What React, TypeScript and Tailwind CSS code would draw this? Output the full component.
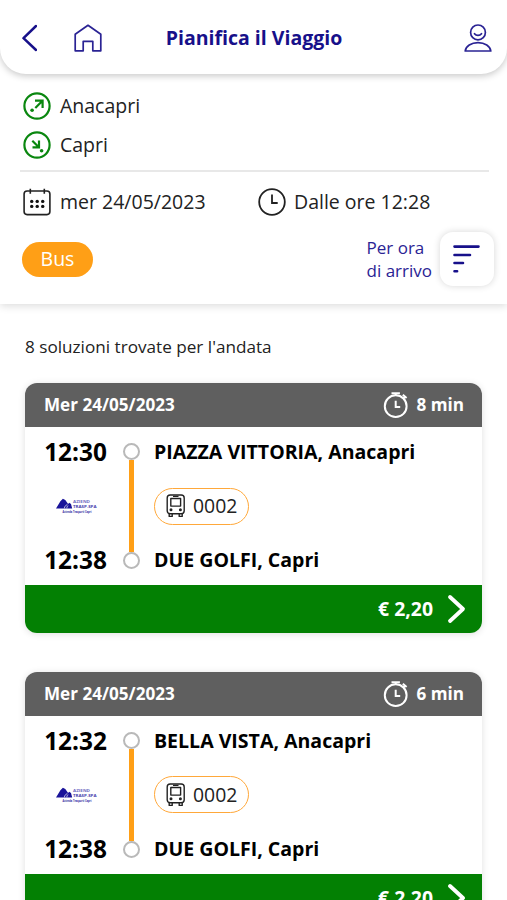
import React from 'react';

type Solution = { date: string; duration: string; depart: string; arrive: string; from: string; to: string; line: string; price: string };

const solutions: Solution[] = [
  { date: 'Mer 24/05/2023', duration: '8 min', depart: '12:30', arrive: '12:38', from: 'PIAZZA VITTORIA, Anacapri', to: 'DUE GOLFI, Capri', line: '0002', price: '€ 2,20' },
  { date: 'Mer 24/05/2023', duration: '6 min', depart: '12:32', arrive: '12:38', from: 'BELLA VISTA, Anacapri', to: 'DUE GOLFI, Capri', line: '0002', price: '€ 2,20' },
];

function BackIcon() {
  return (
    <svg width="16" height="28" viewBox="0 0 16 28" fill="none" stroke="#17108a" strokeWidth="2.5" strokeLinecap="round" strokeLinejoin="round">
      <path d="M15 2 2.500 14.200 15 26" />
    </svg>
  );
}

function HomeIcon() {
  return (
    <svg width="28" height="28" viewBox="0 0 28 28" fill="none" stroke="#2a2394" strokeWidth="1.7" strokeLinejoin="round">
      <path d="M1.2 10.3 14 1.3l12.8 9v16.500h-8v-9.500H9.2v9.500h-8z" />
    </svg>
  );
}

function UserIcon() {
  return (
    <svg width="28" height="28" viewBox="0 0 28 28" fill="none" stroke="#2a2394" strokeWidth="1.7" strokeLinecap="round" strokeLinejoin="round">
      <circle cx="14" cy="8.400" r="7.400" />
      <path d="M10.500 9.700c1.700 2.300 5.300 2.300 7 0" />
      <path d="M1.200 27c.5-4.700 6-8.400 12.800-8.400S26.300 22.300 26.800 27z" />
    </svg>
  );
}

function OriginIcon() {
  return (
    <svg width="28" height="28" viewBox="0 0 28 28" fill="none" stroke="#0a870f" strokeWidth="2.200">
      <circle cx="14" cy="14" r="12.600" />
      <path d="M12.300 16 19 9.200M12 8.600h7.600v7.300" />
      <circle cx="9.100" cy="18.300" r="1.800" fill="#0a870f" stroke="none" />
    </svg>
  );
}

function DestinationIcon() {
  return (
    <svg width="28" height="28" viewBox="0 0 28 28" fill="none" stroke="#0a870f" strokeWidth="2.200">
      <circle cx="14" cy="14" r="12.600" />
      <path d="m9.300 9.700 6 6M16 9.400v6.900H9.500" />
      <circle cx="18.600" cy="19.700" r="1.800" fill="#0a870f" stroke="none" />
    </svg>
  );
}

function CalendarIcon() {
  return (
    <svg width="28" height="28" viewBox="0 0 28 28" fill="none" stroke="#222" strokeWidth="1.600">
      <rect x="1.100" y="3" width="25.800" height="23.600" rx="3" />
      <path d="M7.300 .800v5M21.300 .800v5" />
      <g fill="#111" stroke="none">
        <circle cx="8.700" cy="13.400" r="1.700" /><circle cx="14.200" cy="13.400" r="1.700" /><circle cx="19.700" cy="13.400" r="1.700" />
        <circle cx="8.700" cy="18.400" r="1.700" /><circle cx="14.200" cy="18.400" r="1.700" /><circle cx="19.700" cy="18.400" r="1.700" />
      </g>
    </svg>
  );
}

function ClockIcon() {
  return (
    <svg width="28" height="28" viewBox="0 0 28 28" fill="none" stroke="#222" strokeWidth="1.800">
      <circle cx="14" cy="14" r="12.800" />
      <path d="M14 6.500V15h5.700" />
    </svg>
  );
}

function SortIcon() {
  return (
    <svg width="28" height="30" viewBox="0 0 28 30" fill="none" stroke="#17108a" strokeWidth="2.600" strokeLinecap="round">
      <path d="M1.500 2.600h24M1.500 11h15.500M1.500 19h8.500M1.500 27.300h2.600" />
    </svg>
  );
}

function StopwatchIcon() {
  return (
    <svg width="26" height="28" viewBox="0 0 26 28" fill="none" stroke="#fff" strokeWidth="2">
      <circle cx="12.700" cy="15.200" r="10.900" />
      <path d="M8.500 2.300h8.400M12.700 2.300v2.500M12.700 9.700v6.200h4.500M20.500 7.300l1.500-1.700M19.800 3.800l3.800 3.200" />
    </svg>
  );
}

function BusIcon() {
  return (
    <svg width="20" height="24" viewBox="0 0 20 24" fill="none" stroke="#222" strokeWidth="1.400" strokeLinejoin="round">
      <rect x="1.200" y="1" width="17" height="18.800" rx="3" />
      <path d="M4.800 4.500h9.800v7.600H4.800zM7 2.400h5.500M3.200 19.900v2.500h3v-2.500M13.200 19.900v2.500h3v-2.500" />
      <circle cx="5" cy="15.800" r=".8" /><circle cx="14.400" cy="15.800" r=".8" />
    </svg>
  );
}

function OperatorLogo() {
  return (
    <svg className="ml-[2px] overflow-visible" width="42" height="20" viewBox="0 -1 42 20" fill="#1a149a">
      <path d="M0 11.500 4.400 4.200 6.900 1.800 9.300 3l2.800 4 1.100-1.200 1.800 1.100 1.200 4.600z" />
      <path d="M8.300 11.300c.6-2.500 1.800-3.500 3.200-3.400M10.800 11.300c.2-1.700.7-2.300 1.500-2.500" stroke="#fff" strokeWidth=".7" fill="none" />
      <text x="17" y="6.300" fontFamily="Open Sans, sans-serif" fontSize="3.600" fill="#6f69bf" textLength="17" lengthAdjust="spacingAndGlyphs">AZIEND</text>
      <text x="17" y="11.100" fontFamily="Open Sans, sans-serif" fontSize="3.500" fill="#4a44ae" textLength="23.500" lengthAdjust="spacingAndGlyphs">TRASP.SPA</text>
      <text x="6.500" y="15.600" fontFamily="Open Sans, sans-serif" fontWeight="700" fontSize="3" fill="#332ca5" textLength="29" lengthAdjust="spacingAndGlyphs">Azienda Trasporti Capri</text>
    </svg>
  );
}

function SolutionCard({ s }: { s: Solution }) {
  return (
    <article className="flex h-[250px] flex-col overflow-hidden rounded-xl bg-white shadow-[0_1px_7px_rgba(0,0,0,0.13)]">
      <div className="flex h-11 shrink-0 items-center justify-between bg-[#5f5f5f] pr-[18px] pl-[19px] text-[17.100px] font-bold text-white">
        <span>{s.date}</span>
        <span className="flex items-center gap-[8px]"><StopwatchIcon />{s.duration}</span>
      </div>
      <div className="flex h-[158px] shrink-0 pl-[19px] text-black">
        <div className="flex w-[63px] flex-col items-center justify-between py-2 text-[24.400px] leading-[34px] font-bold">
          <span>{s.depart}</span>
          <OperatorLogo />
          <span>{s.arrive}</span>
        </div>
        <div className="ml-[15px] flex w-[18px] flex-col items-center py-4">
          <span className="size-[17px] shrink-0 rounded-full border-2 border-[#b9b9b9]" />
          <span className="w-[5px] grow bg-[#ff9f16]" />
          <span className="size-[17px] shrink-0 rounded-full border-2 border-[#b9b9b9]" />
        </div>
        <div className="ml-[14px] flex flex-col items-start justify-between py-[10px] text-[19.550px] leading-[30px] font-bold whitespace-nowrap">
          <span>{s.from}</span>
          <span className="flex h-[37px] w-[95px] items-center gap-[7px] rounded-full border-[1.500px] border-[#ffa83a] pl-[11px] text-[19.400px] font-normal text-[#222]">
            <BusIcon />{s.line}
          </span>
          <span>{s.to}</span>
        </div>
      </div>
      <div className="flex grow items-center justify-end gap-[14px] bg-[#038003] pr-4 text-[19.400px] font-bold text-white">
        <span>{s.price}</span>
        <svg width="19" height="30" viewBox="0 0 19 30" fill="none" stroke="#fff" strokeWidth="3.800" strokeLinecap="round" strokeLinejoin="round">
          <path d="M3 3 16 15 3 27" />
        </svg>
      </div>
    </article>
  );
}

export default function App() {
  return (
    <main className="h-[900px] w-full overflow-hidden bg-white font-['Open_Sans',sans-serif] text-[#222]">
      <section className="h-[304px] bg-white shadow-[0_2px_8px_rgba(0,0,0,0.14)]">
        <header className="grid h-[74px] grid-cols-[1fr_auto_1fr] items-center rounded-b-[26px] bg-white pt-[2px] pr-[15px] pl-[21px] shadow-[0_2px_7px_rgba(0,0,0,0.22)]">
          <div className="flex items-center gap-[37px]"><BackIcon /><HomeIcon /></div>
          <h1 className="mr-[5px] text-[19.500px] font-bold whitespace-nowrap text-[#17108a]">Pianifica il Viaggio</h1>
          <div className="flex justify-end"><UserIcon /></div>
        </header>
        <div className="mr-[18px] ml-5 flex h-[98px] flex-col gap-[11px] border-b-2 border-[#e8e8e8] pt-[18px] pl-[3px] text-[19.500px] leading-7">
          <div className="flex items-center gap-[9px]"><OriginIcon />Anacapri</div>
          <div className="flex items-center gap-[9px]"><DestinationIcon />Capri</div>
        </div>
        <div className="flex h-[60px] items-center pl-[23px] text-[19.500px] whitespace-nowrap">
          <div className="flex w-[235px] items-center gap-[9px]"><CalendarIcon />mer 24/05/2023</div>
          <div className="flex items-center gap-2"><ClockIcon />Dalle ore 12:28</div>
        </div>
        <div className="flex h-[54px] items-center pr-[13px] pl-[22px]">
          <span className="flex h-[35px] w-[71px] items-center justify-center rounded-full bg-[#ff9f16] text-[19.500px] text-white">Bus</span>
          <div className="ml-auto text-[17px] leading-[23px] whitespace-nowrap text-[#2a2394]">Per ora<br />di arrivo</div>
          <button className="ml-[8px] flex size-[54px] items-center justify-center rounded-[13px] bg-white shadow-[0_0_7px_rgba(0,0,0,0.16)]"><SortIcon /></button>
        </div>
      </section>
      <p className="mt-[29.500px] ml-[25px] text-[17.150px] leading-[26px]">8 soluzioni trovate per l'andata</p>
      <div className="mx-[25px] mt-[23.500px] flex flex-col gap-[38.500px]">
        {solutions.map((s) => <SolutionCard key={s.depart} s={s} />)}
      </div>
    </main>
  );
}
